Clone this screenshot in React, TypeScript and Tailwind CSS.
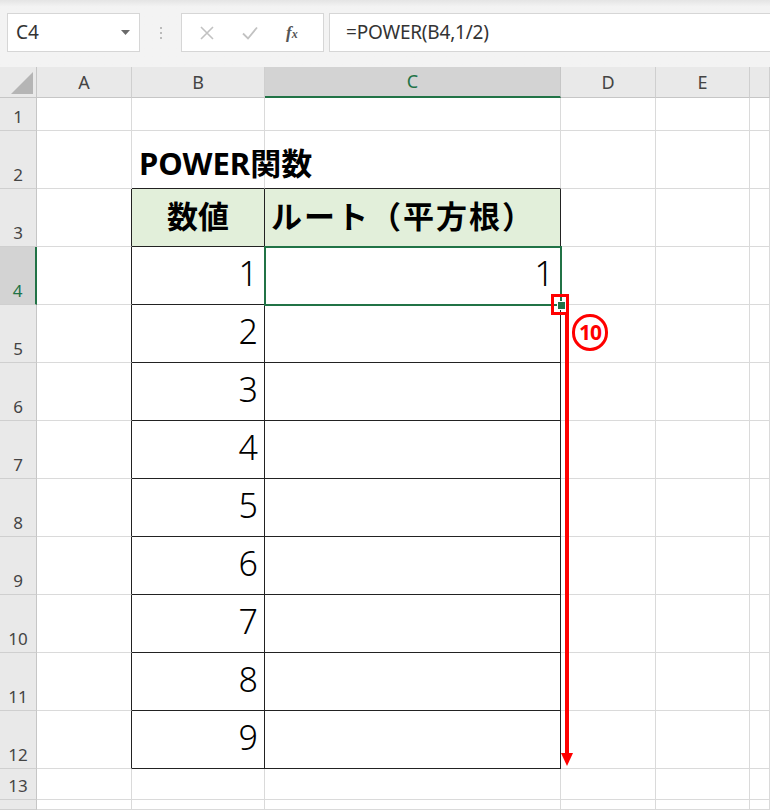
import React from "react";

const colWidths = "grid-cols-[37px_95px_133px_296px_95px_94px_1fr]";
const rowHeights = "grid-rows-[31px_33px_58px_58px_58px_58px_58px_58px_58px_58px_58px_58px_58px_31px_1fr]";

const colLetters = ["", "A", "B", "C", "D", "E", ""];
const rowNums = [1, 2, 3, 4, 5, 6, 7, 8, 9, 10, 11, 12, 13, 14];

function HeaderCell({ c }: { c: number }) {
  if (c === 0) {
    return (
      <div className="relative bg-[#e9e9e9] border-r border-b border-[#c6c6c6]">
        <svg className="absolute left-[11px] top-[5px]" width="22" height="22" viewBox="0 0 22 22">
          <polygon points="22,0 22,22 0,22" fill="#b5b5b5" />
        </svg>
      </div>
    );
  }
  const sel = c === 3;
  return (
    <div
      className={
        sel
          ? "flex items-center justify-center bg-[#d3d3d3] border-r border-[#c6c6c6] border-b-2 border-b-[#217346] text-[#217346] text-[18px]"
          : "flex items-center justify-center bg-[#e9e9e9] border-r border-b border-[#cfcfcf] border-b-[#c6c6c6] text-[#444] text-[18px]"
      }
    >
      {colLetters[c]}
    </div>
  );
}

function RowHeader({ r }: { r: number }) {
  const sel = r === 4;
  return (
    <div
      className={
        sel
          ? "flex items-end justify-center pb-[1px] bg-[#d3d3d3] border-b border-[#cfcfcf] border-r-2 border-r-[#217346] text-[#217346] text-[17px] leading-[24px]"
          : "flex items-end justify-center pb-[1px] bg-[#e9e9e9] border-b border-[#cfcfcf] border-r border-r-[#c6c6c6] text-[#444] text-[17px] leading-[24px]"
      }
    >
      {r <= 13 ? r : null}
    </div>
  );
}

function DataCell({ r, c }: { r: number; c: number }) {
  const inTable = (c === 2 || c === 3) && r >= 3 && r <= 12;
  const rightBlack = inTable || (c === 1 && r >= 3 && r <= 12);
  const bottomBlack = inTable || ((c === 2 || c === 3) && r === 2);
  const header = inTable && r === 3;
  const cls = [
    "relative border-r border-b min-w-0",
    rightBlack ? "border-r-[#222]" : "border-r-[#dadada]",
    bottomBlack ? "border-b-[#222]" : "border-b-[#dadada]",
    header ? "bg-[#e2efda]" : "bg-white",
  ].join(" ");

  let content: React.ReactNode = null;
  if (c === 2 && r === 2) {
    content = (
      <div className="absolute left-[7px] bottom-[5px] whitespace-nowrap font-bold text-[31px] leading-[40px] text-black z-10">
        POWER関数
      </div>
    );
  } else if (c === 2 && r === 3) {
    content = (
      <div className="h-full flex items-center justify-center font-bold text-[31px] text-black pb-[2px]">
        数値
      </div>
    );
  } else if (c === 3 && r === 3) {
    content = (
      <div className="h-full flex items-center pl-[6px] font-bold text-[31px] text-black whitespace-nowrap pb-[2px] tracking-[2px]">
        ルート（平方根）
      </div>
    );
  } else if (c === 2 && r >= 4 && r <= 12) {
    content = (
      <div className="h-full flex items-center justify-end pr-[6px] pb-[4px] font-light text-[34px] text-black">
        {r - 3}
      </div>
    );
  } else if (c === 3 && r === 4) {
    content = (
      <div className="h-full flex items-center justify-end pr-[6px] pb-[4px] font-light text-[34px] text-black">
        1
      </div>
    );
  }

  return (
    <div className={cls}>
      {content}
      {c === 3 && r === 4 && (
        <>
          <div className="absolute left-[-1px] top-[-1px] right-[-2px] bottom-[-2px] border-2 border-[#217346] z-10" />
          <div className="absolute right-[-6px] bottom-[-6px] w-[9px] h-[9px] bg-[#217346] border border-white z-20" />
        </>
      )}
    </div>
  );
}

export default function App() {
  const cells: React.ReactNode[] = [];
  for (let c = 0; c < 7; c++) cells.push(<HeaderCell key={`h${c}`} c={c} />);
  for (const r of rowNums) {
    for (let c = 0; c < 7; c++) {
      if (c === 0) cells.push(<RowHeader key={`r${r}`} r={r} />);
      else cells.push(<DataCell key={`${r}-${c}`} r={r} c={c} />);
    }
  }

  return (
    <div
      className="relative w-[770px] h-[810px] overflow-hidden bg-white flex flex-col"
      style={{ fontFamily: '"Noto Sans", "Noto Sans CJK JP", sans-serif' }}
    >
      {/* Formula bar */}
      <div className="h-[67px] shrink-0 bg-gradient-to-b from-[#e4e4e4] via-[#f3f3f3] via-[10%] to-[#f3f3f3] flex items-start pt-[13px]">
        <div className="ml-[7px] w-[133px] h-[39px] bg-white border border-[#d6d6d6] flex items-center justify-between pl-[8px] pr-[9px]">
          <span className="text-[19px] text-[#333] leading-none">C4</span>
          <svg width="9" height="5" viewBox="0 0 9 5">
            <polygon points="0,0 9,0 4.5,5" fill="#6a6a6a" />
          </svg>
        </div>
        <div className="w-[41px] h-[39px] flex flex-col items-center justify-center gap-[3px]">
          <span className="w-[2px] h-[2px] bg-[#a8a8a8] rounded-full" />
          <span className="w-[2px] h-[2px] bg-[#a8a8a8] rounded-full" />
          <span className="w-[2px] h-[2px] bg-[#a8a8a8] rounded-full" />
        </div>
        <div className="w-[143px] h-[39px] bg-white border border-[#d6d6d6] flex items-center">
          <svg className="ml-[18px]" width="14" height="14" viewBox="0 0 14 14">
            <path d="M1 1 L13 13 M13 1 L1 13" stroke="#c2c2c2" strokeWidth="1.6" />
          </svg>
          <svg className="ml-[28px]" width="16" height="14" viewBox="0 0 16 14">
            <path d="M1 7.5 L6 12.5 L15 1.5" stroke="#c2c2c2" strokeWidth="1.8" fill="none" />
          </svg>
          <span
            className="ml-[28px] italic font-bold text-[17px] text-[#555] leading-none"
            style={{ fontFamily: '"Liberation Serif", serif' }}
          >
            f<span className="text-[12px]">x</span>
          </span>
        </div>
        <div className="ml-[5px] flex-1 mr-[-4px] h-[39px] bg-white border border-[#d6d6d6] flex items-center pl-[16px]">
          <span className="text-[19px] text-[#333] leading-none tracking-[-0.2px]">=POWER(B4,1/2)</span>
        </div>
      </div>

      {/* Grid */}
      <div className={`grid ${colWidths} ${rowHeights} flex-1`}>{cells}</div>

      {/* Red annotation */}
      <div className="absolute left-[551px] top-[294px] w-[18px] h-[21px] border-[3px] border-[#ff0000] z-30" />
      <svg className="absolute left-[558px] top-[313px] z-30" width="20" height="455" viewBox="0 0 20 455">
        <rect x="7" y="0" width="4" height="442" fill="#ff0000" />
        <polygon points="3,440 15,440 9,453" fill="#ff0000" />
      </svg>
      <div className="absolute left-[572px] top-[314px] w-[36px] h-[37px] rounded-full border-[3px] border-[#ff0000] flex items-center justify-center z-30">
        <span className="text-[#ff0000] font-bold text-[21px] leading-none tracking-[-1px]">10</span>
      </div>
    </div>
  );
}
